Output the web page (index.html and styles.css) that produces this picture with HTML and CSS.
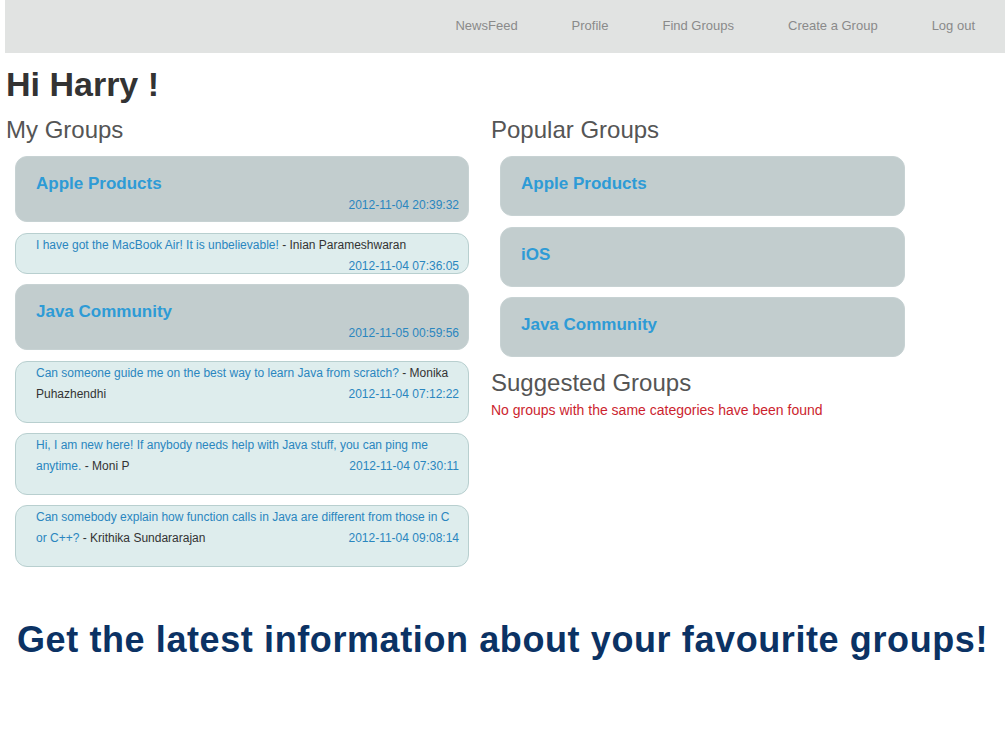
FILE: index.html
```html
<!DOCTYPE html>
<html>
<head>
<meta charset="utf-8">
<title>Groups</title>
<link rel="stylesheet" href="styles.css">
</head>
<body>
<div class="page">
  <nav class="nav">
    <a href="#">NewsFeed</a>
    <a href="#">Profile</a>
    <a href="#">Find Groups</a>
    <a href="#">Create a Group</a>
    <a href="#">Log out</a>
  </nav>
  <h1 class="greeting">Hi Harry !</h1>
  <div class="columns">
    <section class="col col-left">
      <h2 class="section-title">My Groups</h2>
      <div class="list">
        <div class="group group-dated">
          <a class="group-name" href="#">Apple Products</a>
          <div class="date">2012-11-04 20:39:32</div>
        </div>
        <div class="msg">
          <span class="msg-text">I have got the MacBook Air! It is unbelievable!</span> <span class="author">- Inian Parameshwaran</span>
          <span class="date float">2012-11-04 07:36:05</span>
        </div>
        <div class="group group-dated">
          <a class="group-name" href="#">Java Community</a>
          <div class="date">2012-11-05 00:59:56</div>
        </div>
        <div class="msg">
          <span class="msg-text">Can someone guide me on the best way to learn Java from scratch?</span> <span class="author">- Monika Puhazhendhi</span>
          <span class="date float">2012-11-04 07:12:22</span>
        </div>
        <div class="msg">
          <span class="msg-text">Hi, I am new here! If anybody needs help with Java stuff, you can ping me anytime.</span> <span class="author">- Moni P</span>
          <span class="date float">2012-11-04 07:30:11</span>
        </div>
        <div class="msg">
          <span class="msg-text">Can somebody explain how function calls in Java are different from those in C or C++?</span> <span class="author">- Krithika Sundararajan</span>
          <span class="date float">2012-11-04 09:08:14</span>
        </div>
      </div>
    </section>
    <section class="col col-right">
      <h2 class="section-title">Popular Groups</h2>
      <div class="list list-popular">
        <div class="group"><a class="group-name" href="#">Apple Products</a></div>
        <div class="group"><a class="group-name" href="#">iOS</a></div>
        <div class="group"><a class="group-name" href="#">Java Community</a></div>
      </div>
      <h2 class="section-title suggested">Suggested Groups</h2>
      <p class="empty">No groups with the same categories have been found</p>
    </section>
  </div>
  <p class="tagline">Get the latest information about your favourite groups!</p>
</div>
</body>
</html>
```

FILE: styles.css
```css
html, body {
  margin: 0;
  padding: 0;
  background: #ffffff;
}

body {
  font-family: "Liberation Sans", Arial, sans-serif;
  color: #333333;
}

.page {
  padding-left: 5px;
}

.nav {
  height: 53px;
  background: #e1e3e2;
  display: flex;
  justify-content: flex-end;
  align-items: center;
  gap: 54px;
  padding-right: 30px;
}

.nav a {
  font-size: 13px;
  color: #8a8a8a;
  text-decoration: none;
  position: relative;
  top: -1px;
}

.greeting {
  margin: 13px 0 0 1px;
  font-size: 34px;
  line-height: 36px;
  font-weight: bold;
  color: #333333;
}

.columns {
  display: grid;
  grid-template-columns: 474px 425px;
  column-gap: 11px;
  margin-top: 15px;
}

.section-title {
  margin: 0 0 13px 1px;
  font-size: 24px;
  line-height: 26px;
  font-weight: normal;
  color: #555555;
}

.list {
  margin: 0 10px;
}

.list > * + * {
  margin-top: 10px;
}

.list > .group + .msg {
  margin-top: 11px;
}

.list-popular > * + * {
  margin-top: 10.5px;
}

.group {
  background: #c2cdce;
  border: 1px solid #c7d2d3;
  border-radius: 12px;
  padding: 16px 9px 20px 20px;
}

.group-dated {
  padding-bottom: 6px;
}

.group-name {
  display: block;
  font-size: 17px;
  line-height: 22px;
  font-weight: bold;
  color: #2e9bd6;
  text-decoration: none;
}

.date {
  font-size: 12px;
  line-height: 20px;
  color: #2a86bf;
  text-align: right;
}

.msg {
  background: #deeded;
  border: 1px solid #b8cfcf;
  border-radius: 12px;
  padding: 1px 9px 17px 20px;
  font-size: 12px;
  line-height: 21px;
}

.msg-text {
  color: #2a86bf;
}

.author {
  color: #333333;
}

.date.float {
  float: right;
  line-height: 21px;
}

.suggested {
  margin-top: 13px;
  margin-bottom: 6px;
}

.empty {
  margin: 0 0 0 1px;
  font-size: 14px;
  line-height: 16px;
  color: #cc1f2f;
}

.tagline {
  margin: 53px 0 0 -5px;
  text-align: center;
  font-size: 36px;
  line-height: 40px;
  font-weight: bold;
  color: #0b3264;
  letter-spacing: 0.6px;
}
```
